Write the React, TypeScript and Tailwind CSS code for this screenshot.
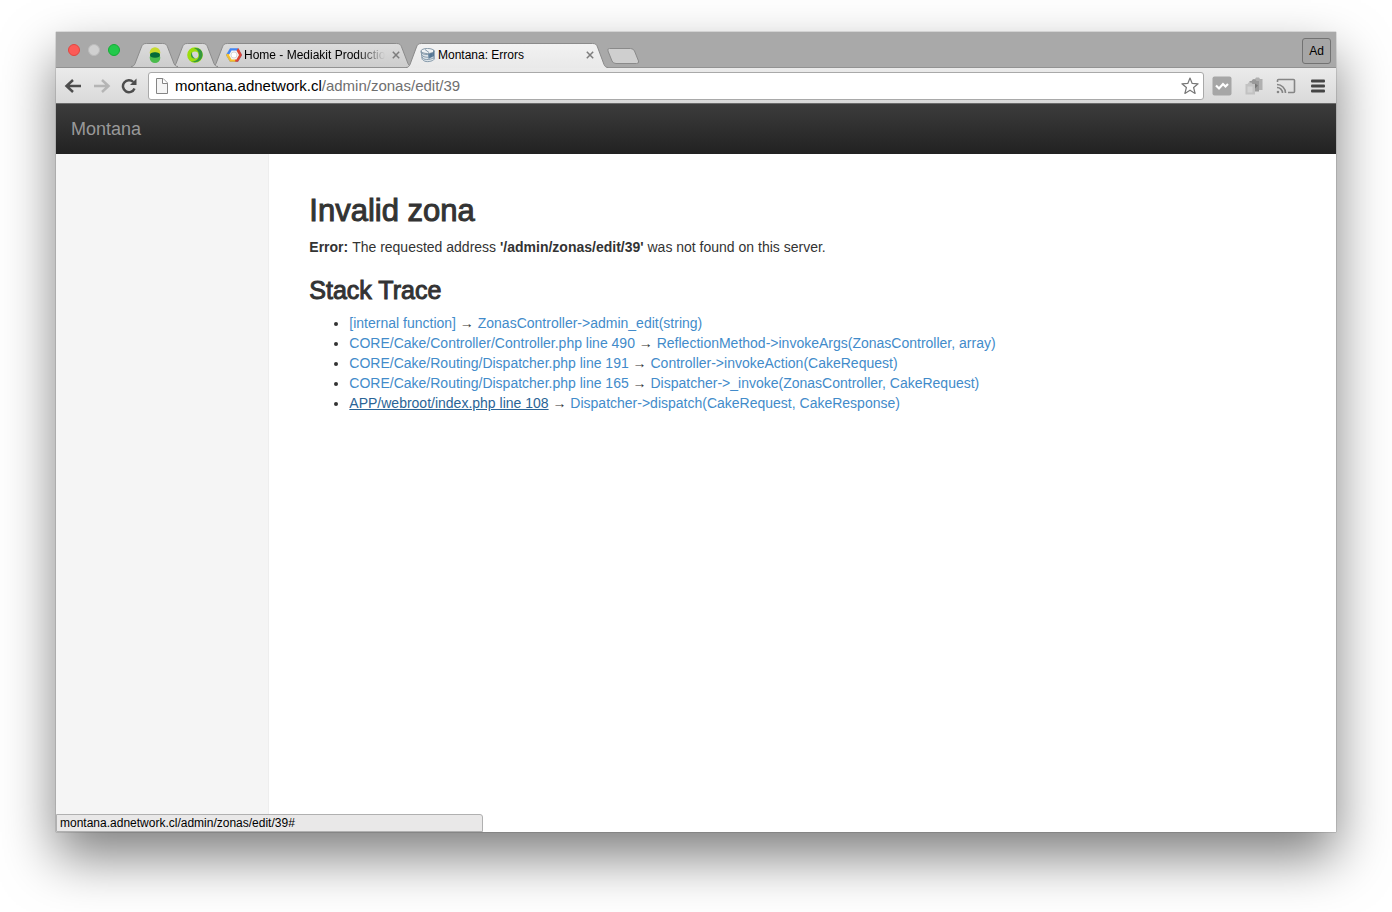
import type { ReactNode } from "react";

type TabProps = {
  width: string;
  layer: string;
  active?: boolean;
  label: string;
  children: ReactNode;
};

function TabShape({ active }: { active?: boolean }) {
  const top = active ? "#f2f2f2" : "#dcdcdc";
  const bottom = active ? "#e9e9e9" : "#cdcdcd";
  const id = active ? "cap-on" : "cap-off";
  return (
    <span aria-hidden="true" className="absolute inset-0 flex">
      <svg className="h-full w-[18px] shrink-0" viewBox="0 0 18 25" preserveAspectRatio="none">
        <defs>
          <linearGradient id={id} x1="0" y1="0" x2="0" y2="1">
            <stop offset="0" stopColor={top} />
            <stop offset="1" stopColor={bottom} />
          </linearGradient>
        </defs>
        <path d="M0 25C2 24.500 3 23.500 4 21.500L10.500 4C11.500 1.500 12.500 .5 15.500 .5H18V25Z" fill={`url(#${id})`} />
        <path d="M0 24.500C2 24.500 3 23.500 4 21.500L10.500 4C11.500 1.500 12.500 .5 15.500 .5H18" fill="none" stroke="#8a8a8a" />
      </svg>
      <span
        className={
          active
            ? "flex-1 border-t border-[#8a8a8a] bg-linear-to-b from-[#f2f2f2] to-[#e9e9e9]"
            : "flex-1 border-t border-[#8a8a8a] bg-linear-to-b from-[#dcdcdc] to-[#cdcdcd]"
        }
      />
      <svg className="h-full w-[18px] shrink-0" viewBox="0 0 18 25" preserveAspectRatio="none">
        <path d="M18 25C16 24.500 15 23.500 14 21.500L7.500 4C6.500 1.500 5.500 .5 2.500 .5H0V25Z" fill={`url(#${id})`} />
        <path d="M18 24.500C16 24.500 15 23.500 14 21.500L7.500 4C6.500 1.500 5.500 .5 2.500 .5H0" fill="none" stroke="#8a8a8a" />
      </svg>
    </span>
  );
}

function Tab({ width, layer, active, label, children }: TabProps) {
  return (
    <div role="tab" aria-selected={!!active} aria-label={label} className={`relative -mr-1.5 shrink-0 ${active ? "h-[25px]" : "h-6"} ${width} ${layer}`}>
      <TabShape active={active} />
      <div className="relative flex h-6 items-center">{children}</div>
    </div>
  );
}

function CloseButton() {
  return (
    <button type="button" aria-label="Close tab" className="flex size-4 items-center justify-center">
      <svg className="size-2" viewBox="0 0 8 8" fill="none" stroke="#7d7d7d" strokeWidth="1.500">
        <path d="M.8 .8l6.400 6.400M7.200 .8L.8 7.200" />
      </svg>
    </button>
  );
}

function CakeIcon() {
  return (
    <svg className="size-4 shrink-0" viewBox="0 0 16 16">
      <path d="M1.500 4.500l1 8c2 3 9 3 11-.5v-9z" fill="#dde4e9" />
      <path d="M8 6l6-3.500V9l-5.500 3z" fill="#5f7f9b" />
      <ellipse cx="7.500" cy="4" rx="6.500" ry="2.500" fill="#f0f3f5" stroke="#8799a8" />
      <path d="M1 4.500c0 3.500 7 3 7 3M1.500 7.500c1 3 7 2.800 7 2.800M2 10c1 3.500 8 3 11 1M2.500 12.500c2 3 8 2.500 11 .5M1.200 4.500l1 8M5 2.500l4 3" fill="none" stroke="#7b91a3" strokeWidth=".9" />
      <path d="M11 6v4M14 3.500v9" stroke="#4a6d8c" />
    </svg>
  );
}

function Toolbar() {
  return (
    <div className="flex h-9 items-center border-b border-[#6b6b6b] bg-linear-to-b from-[#ebebeb] to-[#d9d9d9] px-2">
      <button type="button" aria-label="Back" className="flex w-5 justify-start">
        <svg className="h-4 w-[18px]" viewBox="0 0 18 16" fill="none" stroke="#4d4d4d" strokeWidth="2.500">
          <path d="M17 8H3M9 2L2.500 8 9 14" />
        </svg>
      </button>
      <button type="button" aria-label="Forward" className="ml-2 flex w-5 justify-center">
        <svg className="h-4 w-[18px]" viewBox="0 0 18 16" fill="none" stroke="#b5b5b5" strokeWidth="2.500">
          <path d="M1 8h14M9 2l6.500 6L9 14" />
        </svg>
      </button>
      <button type="button" aria-label="Reload" className="ml-2 flex w-5 justify-start">
        <svg className="h-4 w-[18px]" viewBox="0 0 17 16">
          <path d="M14 10.500A6 6 0 1 1 12.800 4" fill="none" stroke="#4d4d4d" strokeWidth="2.500" />
          <path d="M16 .5v6.500H9.500z" fill="#4d4d4d" />
        </svg>
      </button>
      <div className="ml-2 flex h-7 flex-1 items-center rounded-[3px] border border-[#a9a9a9] bg-white px-1">
        <svg className="ml-px h-4 w-4 shrink-0" viewBox="0 0 16 16">
          <path d="M2.500 .5h6.500L13.500 5v10.500h-11z" fill="#f5f5f5" stroke="#858585" />
          <path d="M8.500 .5V5.500h5" fill="#fff" stroke="#858585" />
        </svg>
        <p className="ml-[5px] flex-1 text-[15px] leading-5 text-[#6f6f6f]">
          <span className="text-black">montana.adnetwork.cl</span>/admin/zonas/edit/39
        </p>
        <button type="button" aria-label="Bookmark this page">
          <svg className="size-[18px]" viewBox="0 0 18 18" fill="#fff" stroke="#777" strokeWidth="1.200" strokeLinejoin="round">
            <path d="M9 1l2.200 5.400 5.900.4-4.500 3.700 1.500 5.900L9 13.200l-5.100 3.200 1.500-5.900L.9 6.800l5.900-.4z" />
          </svg>
        </button>
      </div>
      <div className="ml-2 flex items-center gap-3">
        <button type="button" aria-label="Check extension" className="flex w-5 justify-center">
          <svg className="size-5" viewBox="0 0 20 20">
            <rect x=".5" y=".5" width="19" height="19" rx="2" fill="#a6a6a6" />
            <path d="M4 9.500l3 3L11 8l2.500 2.500L16 8" fill="none" stroke="#fff" strokeWidth="2.200" />
          </svg>
        </button>
        <button type="button" aria-label="Copy extension" className="flex w-5 justify-center">
          <svg className="size-[18px]" viewBox="0 0 18 18">
            <path d="M8 2h2l1-1.500h3L15 2h2.500v11H8z" fill="#b0b0b0" />
            <path d="M4.500 4h2l1-1.500h3l1 1.500H14v10.500H4.500z" fill="#999" />
            <path d="M.5 7h2l1-1.500h3l1 1.500H10v10.500H.5z" fill="#c2c2c2" />
            <path d="M2.500 9.500h5v6h-5z" fill="#d2d2d2" />
            <path d="M10 6.500l3 2-3 3z" fill="#777" />
          </svg>
        </button>
        <button type="button" aria-label="Cast" className="flex w-5 justify-center">
          <svg className="h-4 w-5" viewBox="0 0 20 16" fill="none" stroke="#858585" strokeWidth="1.600">
            <path d="M1.500 4V2.500q0-1 1-1h15q1 0 1 1v11q0 1-1 1H12" />
            <path d="M1 6.500a8.500 8.500 0 0 1 8.500 8.500M1 9.500a5.500 5.500 0 0 1 5.500 5.500" />
            <circle cx="2" cy="14" r="1.300" fill="#858585" stroke="none" />
          </svg>
        </button>
        <button type="button" aria-label="Menu" className="flex w-5 justify-center">
          <svg className="size-[14px]" viewBox="0 0 14 14" fill="#454545">
            <rect y=".5" width="14" height="3" rx="1" />
            <rect y="5.500" width="14" height="3" rx="1" />
            <rect y="10.500" width="14" height="3" rx="1" />
          </svg>
        </button>
      </div>
    </div>
  );
}

const trace = [
  { file: "[internal function]", call: "ZonasController->admin_edit(string)" },
  { file: "CORE/Cake/Controller/Controller.php line 490", call: "ReflectionMethod->invokeArgs(ZonasController, array)" },
  { file: "CORE/Cake/Routing/Dispatcher.php line 191", call: "Controller->invokeAction(CakeRequest)" },
  { file: "CORE/Cake/Routing/Dispatcher.php line 165", call: "Dispatcher->_invoke(ZonasController, CakeRequest)" },
  { file: "APP/webroot/index.php line 108", call: "Dispatcher->dispatch(CakeRequest, CakeResponse)", hovered: true },
];

export default function App() {
  return (
    <div className="flex min-h-screen flex-col bg-white px-14 pt-8 pb-20 font-['Liberation_Sans',Arial,sans-serif] text-sm text-[#333]">
      <div className="relative flex flex-1 flex-col bg-white shadow-[0_0_1px_rgba(0,0,0,0.6),0_25px_50px_rgba(0,0,0,0.5)]">
        <div className="flex h-9 items-end border-b border-[#929292] bg-[#a9a9a9]">
          <div className="flex gap-2 self-center pt-px pr-[11px] pl-3">
            <span className="size-3 rounded-full border border-[#e2463f] bg-[#fc5b57]" />
            <span className="size-3 rounded-full border border-[#bcbcbc] bg-[#d0d0d0]" />
            <span className="size-3 rounded-full border border-[#14ae35] bg-[#23c94b]" />
          </div>
          <div role="tablist" aria-label="Open pages" className="-mb-px flex items-end">
            <Tab width="w-[47px]" layer="z-30 mb-px" label="Pinned page 1">
              <svg className="mx-auto h-4 w-3" viewBox="0 0 12 16">
                <circle cx="6" cy="5.500" r="5.300" fill="#c6da2c" />
                <circle cx="6" cy="10.700" r="5.300" fill="#4abb4c" />
                <ellipse cx="6" cy="8" rx="5" ry="2.800" fill="#036b38" />
              </svg>
            </Tab>
            <Tab width="w-[46px]" layer="z-20 mb-px" label="Pinned page 2">
              <svg className="mx-auto size-4" viewBox="0 0 16 16">
                <circle cx="8" cy="8" r="5.600" fill="none" stroke="#9bdd0c" strokeWidth="4.400" />
                <path d="M7 1.200C13 0 16 4 15.500 8.500 15 13 10 17 4 14.500c5 .2 8-2.500 8-6.500 0-3-1.500-5.800-5-6.800z" fill="#35983f" />
                <path d="M5 5C2.500 9 5 12 8.500 11.500 5.800 10.500 4.800 8 5 5z" fill="#35983f" />
              </svg>
            </Tab>
            <Tab width="w-[200px]" layer="z-10 mb-px" label="Home - Mediakit Production">
              <svg className="ml-3.5 size-4 shrink-0" viewBox="0 0 16 16">
                <path d="M4 1.200h8L16 8l-4 6.800H4L0 8z" fill="#4285f4" />
                <path d="M8 8l4-6.800h.5L16 8l-4 6.800H8.500z" fill="#dc4433" />
                <path d="M8 8L1.500 10.500 4 14.800h5.500z" fill="#f6bf2c" />
                <path d="M8 8L.8 6.700 0 8l1.500 2.700z" fill="#f6bf2c" />
                <path d="M5.500 3.500h5L13 8l-2.500 4.500h-5L3 8z" fill="#f4f4f4" />
                <circle cx="8" cy="8" r="3" fill="#fff" stroke="#cfcfcf" strokeWidth=".8" />
              </svg>
              <span className="ml-0.5 mask-r-from-80% text-xs leading-4 whitespace-nowrap text-black">Home - Mediakit Productio</span>
              <span className="mr-2 ml-auto">
                <CloseButton />
              </span>
            </Tab>
            <Tab width="w-[202px]" layer="z-40" active label="Montana: Errors">
              <span className="ml-3.5">
                <CakeIcon />
              </span>
              <span className="ml-0.5 flex-1 text-xs leading-4 text-black">Montana: Errors</span>
              <span className="mr-2.5">
                <CloseButton />
              </span>
            </Tab>
            <button type="button" aria-label="New tab" className="mb-1 ml-1">
              <svg className="h-4 w-[34px]" viewBox="0 0 34 16">
                <path d="M3.500 .5h21q3 0 4 2.500l4 10q.8 2.500-2 2.500H10q-3 0-4-2.500l-4-10Q1 .5 3.500 .5z" fill="#cfcfcf" stroke="#8a8a8a" />
              </svg>
            </button>
          </div>
          <button type="button" className="mr-[5px] mb-[3px] ml-auto h-[26px] rounded-[3px] border border-[#727272] bg-[#a6a6a6] px-[6px] text-xs text-black">
            Ad
          </button>
        </div>
        <Toolbar />
        <header className="flex h-[50px] items-center bg-linear-to-b from-[#3c3c3c] to-[#222] px-[15px]">
          <a href="#" className="text-lg leading-5 text-[#999]">
            Montana
          </a>
        </header>
        <div className="flex flex-1">
          <aside className="w-1/6 border-r border-[#eee] bg-[#f5f5f5]" />
          <main className="flex-1 p-10">
            <h1 className="mb-[10px] text-[31px] leading-[33px] [-webkit-text-stroke:1px_#333]">Invalid zona</h1>
            <p className="mb-5 leading-5">
              <strong>Error: </strong>The requested address <strong>'/admin/zonas/edit/39'</strong> was not found on this server.
            </p>
            <h3 className="mb-[10px] text-[25px] leading-[26px] [-webkit-text-stroke:1px_#333]">Stack Trace</h3>
            <ul className="list-disc pl-10 leading-5">
              {trace.map((row) => (
                <li key={row.call}>
                  <a href="#" className={row.hovered ? "text-[#2a6496] underline" : "text-[#428bca]"}>
                    {row.file}
                  </a>
                  {" → "}
                  <a href="#" className="text-[#428bca]">
                    {row.call}
                  </a>
                </li>
              ))}
            </ul>
          </main>
        </div>
        <div className="absolute bottom-0 left-0 h-[18px] w-1/3 rounded-tr-[3px] border border-[#b0b0b0] bg-[#e9e8e8] px-[3px] text-xs leading-4 text-black">
          montana.adnetwork.cl/admin/zonas/edit/39#
        </div>
      </div>
    </div>
  );
}
